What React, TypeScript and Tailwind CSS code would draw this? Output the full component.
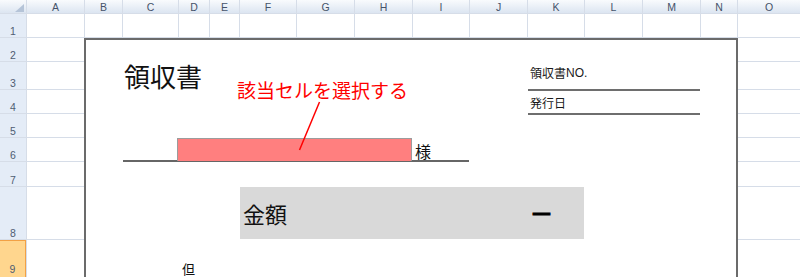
import clsx from "clsx";

const COLS = ["A", "B", "C", "D", "E", "F", "G", "H", "I", "J", "K", "L", "M", "N", "O"];

// cells per sheet row that sit outside the receipt frame (B2:N9)
const ROWS = [
  { n: 1, free: 15 },
  { n: 2, free: 2 },
  { n: 3, free: 2 },
  { n: 4, free: 2 },
  { n: 5, free: 2 },
  { n: 6, free: 2 },
  { n: 7, free: 2 },
  { n: 8, free: 2 },
  { n: 9, free: 2 },
];

const jp = "font-['Noto_Sans_CJK_JP','Noto_Sans',sans-serif]";

function ColHead({ label }: { label: string }) {
  return (
    <div className="flex items-start justify-center pt-[2px] bg-linear-to-b from-[#f9fbfd] to-[#dce5f1] text-[10.5px] leading-none text-[#45536a]">
      {label}
    </div>
  );
}

function RowHead({ n, active }: { n: number; active?: boolean }) {
  return (
    <div
      className={clsx(
        "flex items-end justify-center text-[10.5px] leading-none text-[#4f5d72]",
        active ? "bg-[#ffd68e] border-r border-t border-[#f2a145] pb-[3px]" : "bg-[#e4ecf7] pb-px"
      )}
    >
      {n}
    </div>
  );
}

export default function App() {
  return (
    <div className="relative grid h-[277px] w-[800px] grid-cols-[26px_57px_37px_55px_30px_29px_56px_57px_57px_56px_57px_56px_57px_57px_36px_1fr] grid-rows-[13px_23px_23px_27px_23px_23px_23px_24px_52px_1fr] gap-px overflow-hidden bg-[#d6dde8] font-['Liberation_Sans',sans-serif]">
      {/* Corner */}
      <div className="relative bg-linear-to-b from-[#f9fbfd] to-[#dce5f1]">
        <svg className="absolute right-[2px] bottom-[1px]" width="9" height="8" viewBox="0 0 9 8">
          <path d="M9 0 L9 8 L0 8 Z" fill="#b5c4d8" />
        </svg>
      </div>
      {COLS.map((c) => (
        <ColHead key={c} label={c} />
      ))}

      {/* Sheet rows: header + empty cells outside the frame */}
      {ROWS.map((r) => [
        <RowHead key={`h${r.n}`} n={r.n} active={r.n === 9} />,
        ...Array.from({ length: r.free }, (_, i) => <div key={`c${r.n}-${i}`} className="bg-white" />),
      ])}

      {/* Receipt frame */}
      <div className="col-start-3 col-end-16 row-start-3 row-end-11 -mx-px border-x-2 border-t-2 border-[#6b6b6b] bg-white" />

      {/* Title */}
      <div className={clsx("col-start-4 col-end-8 row-start-4 flex items-center pl-px text-[26px] leading-none text-[#111]", jp)}>
        領収書
      </div>

      {/* Receipt no. / issue date */}
      <div className="col-start-12 col-end-15 row-start-4 -mb-[2px] flex items-end border-b-2 border-[#6e6e6e] pb-[10px] pl-[2px] text-[12px] leading-none text-[#1a1a1a]">
        <span className={jp}>領収書</span>
        <span>NO.</span>
      </div>
      <div className={clsx("col-start-12 col-end-15 row-start-5 -mb-[2px] flex items-end border-b-2 border-[#6e6e6e] pb-[4px] pl-[2px] text-[12px] leading-none text-[#1a1a1a]", jp)}>
        発行日
      </div>

      {/* Addressee line */}
      <div className="col-start-4 col-end-11 row-start-7 -mb-px border-b-2 border-[#666]" />
      <div className="col-start-5 col-end-10 row-start-7 -ml-[2px] border border-b-0 border-[#9c9c9c] bg-[#ff7f7f]" />
      <div className={clsx("col-start-10 row-start-7 flex items-end pb-[2px] pl-[2px] text-[16px] leading-none text-[#111]", jp)}>
        様
      </div>

      {/* Amount */}
      <div className="col-start-7 col-end-13 row-start-9 flex items-center justify-between bg-[#d9d9d9] pl-[3px] pr-[34px]">
        <span className={clsx("text-[22px] leading-none text-[#111]", jp)}>金額</span>
        <span className={clsx("text-[17px] font-bold leading-none text-black [-webkit-text-stroke:1px_black]", jp)}>━</span>
      </div>

      {/* Proviso */}
      <div className={clsx("col-start-5 row-start-10 pl-[3px] pt-[22px] text-[13px] leading-none text-[#111]", jp)}>
        但
      </div>

      {/* Callout */}
      <div className={clsx("absolute left-[237px] top-[80px] whitespace-nowrap text-[19px] leading-none text-[#ff0000]", jp)}>
        該当セルを選択する
      </div>
      <svg className="absolute left-[298px] top-[101px]" width="24" height="50" viewBox="0 0 24 50">
        <line x1="21.5" y1="1" x2="1.5" y2="49" stroke="#ff0000" strokeWidth="1.5" />
      </svg>
    </div>
  );
}
